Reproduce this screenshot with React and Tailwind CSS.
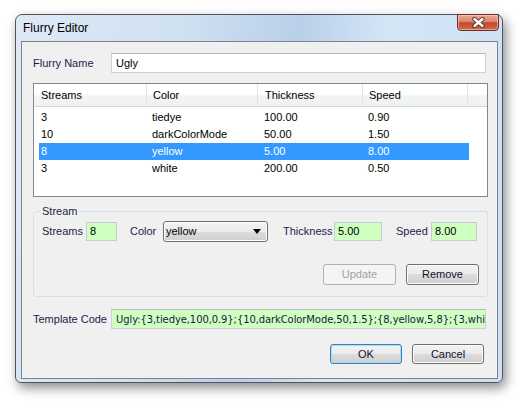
import React from 'react'

const rows = [
  { streams: '3', color: 'tiedye', thickness: '100.00', speed: '0.90' },
  { streams: '10', color: 'darkColorMode', thickness: '50.00', speed: '1.50' },
  { streams: '8', color: 'yellow', thickness: '5.00', speed: '8.00', selected: true },
  { streams: '3', color: 'white', thickness: '200.00', speed: '0.50' },
]

const btn =
  'h-full rounded-[3px] border border-[#707070] bg-[linear-gradient(#f2f2f2_0%,#ebebeb_50%,#dddddd_50%,#cfcfcf_100%)] shadow-[inset_0_0_0_1px_#fcfcfc] text-[11px] text-[#101030]'

const CloseGlyph = () => (
  <svg width="15" height="11" viewBox="0 0 15 11">
    <path d="M3.5 2 L11.5 9 M11.5 2 L3.5 9" stroke="#4a2a26" strokeWidth="4.2" strokeLinecap="round" fill="none" />
    <path d="M3.5 2 L11.5 9 M11.5 2 L3.5 9" stroke="#ffffff" strokeWidth="2.4" strokeLinecap="round" fill="none" />
  </svg>
)

export default function App() {
  return (
    <div className="min-h-screen bg-white pl-[15px] pt-[14px] font-['Liberation_Sans',Arial,sans-serif]">
      <div className="relative flex h-[369px] w-[488px] flex-col rounded-t-[7px] rounded-b-[6px] border border-[#50555c] bg-[linear-gradient(100deg,#dde9f5_0%,#d0e1f2_30%,#b9d0e9_52%,#d4e5f6_68%,#cbe0f4_100%)] shadow-[3px_5px_12px_rgba(0,0,0,0.45)]">
        {/* title bar */}
        <div className="flex h-[26px] items-center pl-[7px] text-[12px] text-black">Flurry Editor</div>
        <div className="absolute right-[3px] top-[-1px] flex h-[17px] w-[42px] items-center justify-center rounded-b-[4px] border border-[#6b2f25] bg-[linear-gradient(#eaa896_0%,#d98470_45%,#c2462c_52%,#d36a4e_100%)] shadow-[inset_0_0_0_1px_rgba(255,220,210,0.5)]">
          <CloseGlyph />
        </div>

        {/* client area */}
        <div className="ml-[5px] mr-[4px] h-[338px] border border-[#7e838a] bg-[#f0f0f0] pl-[11px] text-[11px]">
          <div className="mt-[11px] flex h-[20px] items-center">
            <span className="w-[78px] text-[#1c1c4c]">Flurry Name</span>
            <div className="flex h-[20px] w-[375px] items-center border border-[#cdd0d4] border-t-[#b5b8bd] bg-white pl-[4px] text-black">Ugly</div>
          </div>

          {/* list */}
          <div className="mt-[10px] h-[114px] w-[455px] border border-[#828790] bg-white text-black">
            <div className="flex h-[23px] border-b border-[#d5d5d5] bg-[linear-gradient(#ffffff_0%,#ffffff_45%,#f3f4f6_55%,#f0f1f3_100%)]">
              <div className="flex w-[113px] items-center border-r border-[#e2e3e5] pl-[7px] pt-[1px]">Streams</div>
              <div className="flex w-[111px] items-center border-r border-[#e2e3e5] pl-[6px] pt-[1px]">Color</div>
              <div className="flex w-[105px] items-center border-r border-[#e2e3e5] pl-[7px] pt-[1px]">Thickness</div>
              <div className="flex w-[105px] items-center border-r border-[#e2e3e5] pl-[6px] pt-[1px]">Speed</div>
              <div className="flex-1" />
            </div>
            <div className="mt-[2px]">
              {rows.map((r, i) => (
                <div
                  key={i}
                  className={`ml-[5px] flex h-[17px] w-[430px] items-center ${r.selected ? 'bg-[#3399ff] text-white' : ''}`}
                >
                  <span className="w-[107px] pl-[2px]">{r.streams}</span>
                  <span className="w-[111px] pl-[6px]">{r.color}</span>
                  <span className="w-[105px] pl-[7px]">{r.thickness}</span>
                  <span className="w-[107px] pl-[6px]">{r.speed}</span>
                </div>
              ))}
            </div>
          </div>

          {/* stream group */}
          <fieldset className="mt-[8px] w-[455px] rounded-[3px] border border-[#d5dfe5] pb-[11px]">
            <legend className="ml-[6px] px-[2px] leading-[13px] text-[#1c1c4c]">Stream</legend>
            <div className="mt-[3px] flex h-[21px] items-center pl-[8px] text-[#1c1c4c]">
              <span className="w-[44px]">Streams</span>
              <div className="h-[19px] w-[31px] border border-[#c9ccd1] bg-[#cfffc1] pl-[3px] leading-[16px] text-black">8</div>
              <span className="ml-[13px] w-[33px]">Color</span>
              <div className="flex h-[21px] w-[105px] items-center justify-between rounded-[3px] border border-[#707070] bg-[linear-gradient(#f2f2f2_0%,#ebebeb_50%,#dddddd_50%,#cfcfcf_100%)] pl-[2px] pr-[6px] text-black shadow-[inset_0_0_0_1px_#fcfcfc]">
                <span>yellow</span>
                <svg width="8" height="5" viewBox="0 0 8 5">
                  <path d="M0 0 H8 L4 5 Z" fill="#000" />
                </svg>
              </div>
              <span className="ml-[15px] w-[51px]">Thickness</span>
              <div className="h-[19px] w-[48px] border border-[#c9ccd1] bg-[#cfffc1] pl-[3px] leading-[16px] text-black">5.00</div>
              <span className="ml-[14px] w-[35px]">Speed</span>
              <div className="h-[19px] w-[46px] border border-[#c9ccd1] bg-[#cfffc1] pl-[3px] leading-[16px] text-black">8.00</div>
            </div>
            <div className="mt-[22px] flex h-[21px] justify-end gap-[10px] pr-[8px]">
              <button className="h-full w-[73px] rounded-[3px] border border-[#adb2b5] bg-[#f4f4f4] text-[11px] text-[#a3a3a3]">
                Update
              </button>
              <button className={`${btn} w-[73px]`}>Remove</button>
            </div>
          </fieldset>

          {/* template code */}
          <div className="mt-[12px] flex h-[20px] items-center">
            <span className="w-[78px] text-[#1c1c4c]">Template Code</span>
            <div className="flex h-[20px] w-[375px] items-center overflow-hidden whitespace-nowrap border border-[#cdd0d4] border-t-[#b5b8bd] bg-[#cfffc1] pl-[4px] font-['DejaVu_Sans',sans-serif] text-[10px] tracking-[-0.1px] text-[#1a1a40]">
              Ugly:{'{'}3,tiedye,100,0.9{'}'};{'{'}10,darkColorMode,50,1.5{'}'};{'{'}8,yellow,5,8{'}'};{'{'}3,white,200,0.5{'}'}
            </div>
          </div>

          <div className="mt-[15px] flex h-[20px] justify-end gap-[10px] pr-[13px]">
            <button className="h-full w-[72px] rounded-[3px] border border-[#3c7fb1] bg-[linear-gradient(#f2f2f2_0%,#ebebeb_50%,#dddddd_50%,#cfcfcf_100%)] text-[11px] text-[#101030] shadow-[inset_0_0_0_1px_#a6dcf5]">
              OK
            </button>
            <button className={`${btn} w-[72px]`}>Cancel</button>
          </div>
        </div>
      </div>
    </div>
  )
}
